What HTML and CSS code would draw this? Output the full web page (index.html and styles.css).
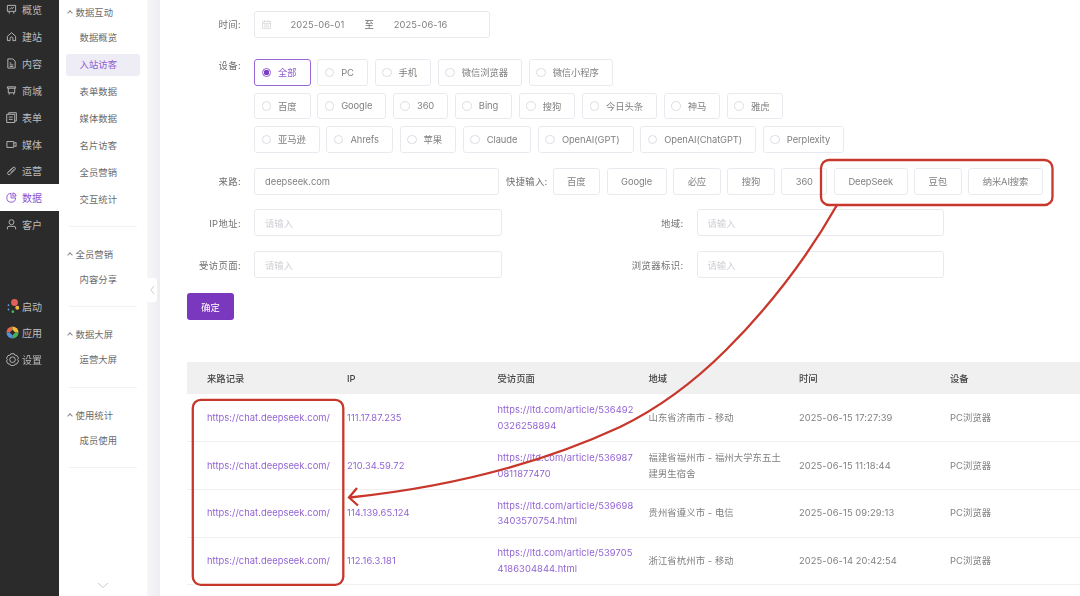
FILE: index.html
```html
<!DOCTYPE html>
<html lang="zh-CN">
<head>
  <meta charset="UTF-8">
  <title>入站访客</title>
  <link rel="stylesheet" href="styles.css">
</head>
<body>
  <!-- Main rail -->
  <nav class="rail">
    <ul class="rail-group">
      <li class="rail-item"><svg class="rail-icon" viewBox="0 0 12 12"><path d="M1.500 1.500h9v6.500h-9zM3.500 8v2.500M8.500 8v2.500M3.500 6l2-2 1.500 1 1.500-1.800"/></svg>概览</li>
      <li class="rail-item"><svg class="rail-icon" viewBox="0 0 12 12"><path d="M1.500 5.800 6 1.800l4.500 4V10.500h-3V8a1.500 1.500 0 0 0-3 0v2.500h-3z"/></svg>建站</li>
      <li class="rail-item"><svg class="rail-icon" viewBox="0 0 12 12"><path d="M2 1h5.500L10 3.500V11H2zM4 5.500h2M4 7.500h4M4 9.300h4"/></svg>内容</li>
      <li class="rail-item"><svg class="rail-icon" viewBox="0 0 12 12"><path d="M1.500 2h9v1.500h-9zM2.500 3.500v5h7v-5M3.500 8.500v2M8.500 8.500v2"/></svg>商城</li>
      <li class="rail-item"><svg class="rail-icon" viewBox="0 0 12 12"><path d="M3 2.500V.8h8.300v9H9.500M.8 2.500h8.700v9H.8zM3 5.500h4.300M3 8h4.300"/></svg>表单</li>
      <li class="rail-item"><svg class="rail-icon" viewBox="0 0 12 12"><path d="M1 2.800h7.500v6.400H1zM8.500 4.800l2.500-1v4.400l-2.500-1"/></svg>媒体</li>
      <li class="rail-item"><svg class="rail-icon" viewBox="0 0 12 12"><path d="M3.500 7 7.800 2.700a1.500 1.500 0 0 1 2.100 2.100L4.600 10.100a1.300 1.300 0 0 1-2.400-2.300L7.500 3M5 8.500 9 4.500"/></svg>运营</li>
      <li class="rail-item is-active"><svg class="rail-icon" viewBox="0 0 12 12"><path d="M5.500 1.500a4.800 4.800 0 1 0 5 5h-5zM7.500 1a3.800 3.800 0 0 1 3.500 3.500H7.500z"/></svg>数据</li>
      <li class="rail-item"><svg class="rail-icon" viewBox="0 0 12 12"><circle cx="6" cy="3.500" r="2.700"/><path d="M1.500 11.300V9.800a1.800 1.800 0 0 1 1.800-1.800h5.400a1.800 1.800 0 0 1 1.800 1.800v1.500"/></svg>客户</li>
    </ul>
    <ul class="rail-group rail-tools">
      <li class="rail-item"><svg class="rail-icon icon-start" viewBox="0 0 13 15"><circle cx="8.500" cy="3.500" r="3.400" fill="#e0605a" stroke="none"/><circle cx="11.300" cy="8.800" r="2" fill="#eebb3c" stroke="none"/><circle cx="6.800" cy="12.700" r="1.400" fill="#3fb45c" stroke="none"/><circle cx="2.500" cy="6.200" r=".9" fill="#5b9fe0" stroke="none"/><circle cx="2.500" cy="10.500" r=".9" fill="#5b9fe0" stroke="none"/></svg>启动</li>
      <li class="rail-item"><svg class="rail-icon" viewBox="0 0 14 14"><path d="M7 .5a6.500 6.500 0 0 0-6.500 6.500h3.500L7 4z" fill="#e0684a" stroke="none"/><path d="M7 .5A6.500 6.500 0 0 1 13.500 7H10L7 4z" fill="#efbd3a" stroke="none"/><path d="M13.500 7A6.500 6.500 0 0 1 7 13.500V10l3-3z" fill="#45b05c" stroke="none"/><path d="M7 13.500A6.500 6.500 0 0 1 .5 7H4l3 3z" fill="#4f92dc" stroke="none"/></svg>应用</li>
      <li class="rail-item"><svg class="rail-icon" viewBox="0 0 14 14"><path d="M5.200 .8h3.600l1 1.700 2 .2 1.700 3-1.100 1.500 1.100 1.500-1.700 3-2 .2-1 1.700H5.200l-1-1.700-2-.2L.5 8.700 1.600 7.200.5 5.700l1.700-3 2-.2z"/><circle cx="7" cy="7.200" r="3"/></svg>设置</li>
    </ul>
  </nav>

  <!-- Sub menu -->
  <aside class="submenu">
    <section class="sub-group">
      <h4 class="sub-title"><i class="caret"></i>数据互动</h4>
      <a class="sub-link">数据概览</a>
      <a class="sub-link is-active">入站访客</a>
      <a class="sub-link">表单数据</a>
      <a class="sub-link">媒体数据</a>
      <a class="sub-link">名片访客</a>
      <a class="sub-link">全员营销</a>
      <a class="sub-link">交互统计</a>
    </section>
    <section class="sub-group">
      <h4 class="sub-title"><i class="caret"></i>全员营销</h4>
      <a class="sub-link">内容分享</a>
    </section>
    <section class="sub-group">
      <h4 class="sub-title"><i class="caret"></i>数据大屏</h4>
      <a class="sub-link">运营大屏</a>
    </section>
    <section class="sub-group">
      <h4 class="sub-title"><i class="caret"></i>使用统计</h4>
      <a class="sub-link">成员使用</a>
    </section>
    <svg class="sub-more" viewBox="0 0 12 7"><path d="M1 1l5 4.500L11 1"/></svg>
  </aside>

  <div class="gutter">
    <div class="collapse"><svg viewBox="0 0 6 12"><path d="M5 1 1 6l4 5"/></svg></div>
  </div>

  <main class="main">
    <div class="form-row row-time">
      <label class="field-label">时间:</label>
      <div class="date-range">
        <svg class="date-icon" viewBox="0 0 10 10"><path d="M.5 1.500h9v8h-9zM.5 3.800h9M2.800.5v2M7.200.5v2M2 5.500h6M2 7.500h6"/></svg>
        <span class="date-val">2025-06-01</span>
        <span class="date-to">至</span>
        <span class="date-val">2025-06-16</span>
      </div>
    </div>

    <div class="form-row row-device">
      <label class="field-label label-top">设备:</label>
      <div class="radio-rows">
        <div class="radio-row">
          <span class="radio is-on"><i></i>全部</span>
          <span class="radio"><i></i>PC</span>
          <span class="radio"><i></i>手机</span>
          <span class="radio"><i></i>微信浏览器</span>
          <span class="radio"><i></i>微信小程序</span>
        </div>
        <div class="radio-row">
          <span class="radio"><i></i>百度</span>
          <span class="radio"><i></i>Google</span>
          <span class="radio"><i></i>360</span>
          <span class="radio"><i></i>Bing</span>
          <span class="radio"><i></i>搜狗</span>
          <span class="radio"><i></i>今日头条</span>
          <span class="radio"><i></i>神马</span>
          <span class="radio"><i></i>雅虎</span>
        </div>
        <div class="radio-row">
          <span class="radio"><i></i>亚马逊</span>
          <span class="radio"><i></i>Ahrefs</span>
          <span class="radio"><i></i>苹果</span>
          <span class="radio"><i></i>Claude</span>
          <span class="radio"><i></i>OpenAI(GPT)</span>
          <span class="radio"><i></i>OpenAI(ChatGPT)</span>
          <span class="radio"><i></i>Perplexity</span>
        </div>
      </div>
    </div>

    <div class="form-row row-source">
      <label class="field-label">来路:</label>
      <div class="input input-source has-value">deepseek.com</div>
      <span class="quick-label">快捷输入:</span>
      <div class="quick-btns">
        <span class="quick">百度</span>
        <span class="quick">Google</span>
        <span class="quick">必应</span>
        <span class="quick">搜狗</span>
        <span class="quick">360</span>
        <span class="quick">DeepSeek</span>
        <span class="quick">豆包</span>
        <span class="quick">纳米AI搜索</span>
      </div>
    </div>

    <div class="form-row row-pair">
      <div class="field">
        <label class="field-label">IP地址:</label>
        <div class="input">请输入</div>
      </div>
      <div class="field">
        <label class="field-label">地域:</label>
        <div class="input">请输入</div>
      </div>
    </div>

    <div class="form-row row-pair">
      <div class="field">
        <label class="field-label">受访页面:</label>
        <div class="input">请输入</div>
      </div>
      <div class="field">
        <label class="field-label">浏览器标识:</label>
        <div class="input">请输入</div>
      </div>
    </div>

    <button class="submit">确定</button>

    <table class="records">
      <thead>
        <tr>
          <th class="col-src">来路记录</th>
          <th class="col-ip">IP</th>
          <th class="col-page">受访页面</th>
          <th class="col-area">地域</th>
          <th class="col-time">时间</th>
          <th>设备</th>
        </tr>
      </thead>
      <tbody>
        <tr>
          <td class="link">https://chat.deepseek.com/</td>
          <td class="link">111.17.87.235</td>
          <td class="link">https://ltd.com/article/5364920326258894</td>
          <td>山东省济南市 - 移动</td>
          <td>2025-06-15 17:27:39</td>
          <td>PC浏览器</td>
        </tr>
        <tr>
          <td class="link">https://chat.deepseek.com/</td>
          <td class="link">210.34.59.72</td>
          <td class="link">https://ltd.com/article/5369870811877470</td>
          <td>福建省福州市 - 福州大学东五土建男生宿舍</td>
          <td>2025-06-15 11:18:44</td>
          <td>PC浏览器</td>
        </tr>
        <tr>
          <td class="link">https://chat.deepseek.com/</td>
          <td class="link">114.139.65.124</td>
          <td class="link">https://ltd.com/article/5396983403570754.html</td>
          <td>贵州省遵义市 - 电信</td>
          <td>2025-06-15 09:29:13</td>
          <td>PC浏览器</td>
        </tr>
        <tr>
          <td class="link">https://chat.deepseek.com/</td>
          <td class="link">112.16.3.181</td>
          <td class="link">https://ltd.com/article/5397054186304844.html</td>
          <td>浙江省杭州市 - 移动</td>
          <td>2025-06-14 20:42:54</td>
          <td>PC浏览器</td>
        </tr>
      </tbody>
    </table>
  </main>

  <!-- Red annotation drawn over the page -->
  <svg class="markup" viewBox="0 0 1080 596">
    <rect x="821" y="160" width="231.500" height="45" rx="8"/>
    <rect x="192.800" y="399.800" width="150.500" height="185" rx="8"/>
    <path d="M837 205C808 256 770 306 726 350C693 383 655 410 620 427C540 464 450 487 350 497.500"/>
    <path d="M357 488 349 497.500 358 505.500"/>
  </svg>
</body>
</html>
```

FILE: styles.css
```css
* {
  box-sizing: border-box;
}
html, body {
  margin: 0;
  padding: 0;
  height: 596px;
  overflow: hidden;
}
body {
  position: relative;
  display: flex;
  background: #fff;
  color: #6f6f6f;
  font-family: Inter, "Noto Sans CJK SC", sans-serif;
  font-size: 9.33px;
  filter: blur(.35px); /* the shot is a soft upscale */
}
ul {
  list-style: none;
  margin: 0;
  padding: 0;
}

/* Main rail */
.rail {
  flex: 0 0 59px;
  background: #2b2b2b;
}
.rail-group {
  margin-top: -3.500px;
}
.rail-tools {
  margin-top: 54.500px;
}
.rail-item {
  display: flex;
  align-items: center;
  height: 26.850px;
  padding-left: 5.500px;
  gap: 5.500px;
  color: #bdbdbd;
  font-size: 10px;
}
.rail-item.is-active {
  background: #fff;
  color: #8a52d2;
}
.rail-icon {
  flex: 0 0 11px;
  width: 11px;
  height: 11px;
  fill: none;
  stroke: currentColor;
  stroke-width: 1;
}
.rail-tools .rail-icon {
  flex-basis: 13px;
  width: 13px;
  height: 13px;
}
.rail-tools .icon-start {
  height: 15px;
}
.rail-tools .rail-item {
  gap: 3.500px;
}

/* Sub menu */
.submenu {
  position: relative;
  flex: 0 0 88px;
  background: #fff;
  padding: 5.500px 7px 0 7px;
}
.sub-group {
  margin: 0 3px 20.300px 3px;
  padding-bottom: 10.500px;
  border-bottom: 1px solid #f3f3f6;
}
.sub-title {
  display: flex;
  align-items: center;
  height: 13px;
  margin: 0 0 8.750px -3px;
  font-weight: 400;
  font-size: 9.33px;
  letter-spacing: .1px;
  color: #6a6a6a;
}
.caret {
  width: 4px;
  height: 4px;
  margin: 2px 3.500px 0 2px;
  border-left: 1px solid #888;
  border-top: 1px solid #888;
  transform: rotate(45deg);
}
.sub-link {
  display: block;
  height: 21.500px;
  line-height: 21.500px;
  margin: 0 -3px 5.400px -3px;
  padding-left: 13.500px;
  border-radius: 3px;
  letter-spacing: .1px;
  color: #6a6a6a;
}
.sub-link.is-active {
  background: #eeecf5;
  color: #8f5dd3;
}
.sub-more {
  position: absolute;
  left: 38px;
  top: 582px;
  width: 12px;
  height: 7px;
  fill: none;
  stroke: #ccc;
}

.gutter {
  position: relative;
  flex: 0 0 13px;
  background: linear-gradient(90deg, #f6f5f8, #eeedf1);
}
.collapse {
  position: absolute;
  left: 0;
  top: 278px;
  width: 10px;
  height: 24px;
  background: #fff;
  border-radius: 0 3px 3px 0;
  display: flex;
  align-items: center;
  justify-content: center;
}
.collapse svg {
  width: 5px;
  height: 10px;
  fill: none;
  stroke: #c4c4c8;
}

/* Filter form */
.main {
  flex: 1;
  min-width: 0;
  padding: 11px 0 0 27px;
}
.form-row {
  display: flex;
  align-items: center;
}
.row-device {
  align-items: flex-start;
  margin-top: 21.500px;
}
.row-source {
  margin-top: 15.500px;
}
.row-pair {
  margin-top: 14.750px;
  gap: 128px;
}
.field {
  display: flex;
  align-items: center;
}
.field-label {
  flex: 0 0 54px;
  margin-right: 13px;
  text-align: right;
  white-space: nowrap;
  letter-spacing: .4px;
  color: #707070;
}
.label-top {
  line-height: 13px;
}
.date-range {
  display: flex;
  align-items: center;
  width: 235.500px;
  height: 26.500px;
  border: 1px solid #e8e8ef;
  border-radius: 3px;
  padding-left: 7px;
}
.date-icon {
  width: 9px;
  height: 9px;
  fill: none;
  stroke: #d2d2d6;
  stroke-width: .8;
}
.date-val {
  letter-spacing: .1px;
  color: #808080;
}
.date-range .date-icon + .date-val {
  margin-left: 19.500px;
}
.date-to {
  margin: 0 20px;
  color: #6a6a6a;
}
.radio-rows {
  display: flex;
  flex-direction: column;
  gap: 7px;
}
.radio-row {
  display: flex;
  gap: 6.700px;
}
.radio {
  display: flex;
  align-items: center;
  height: 26.500px;
  padding: 0 13px 0 6.500px;
  border: 1px solid #e9e9f0;
  border-radius: 3px;
  letter-spacing: -.08px;
  color: #808080;
  white-space: nowrap;
}
.radio i {
  width: 9.500px;
  height: 9.500px;
  margin-right: 7px;
  border: 1px solid #dcdce2;
  border-radius: 50%;
}
.radio.is-on {
  border-color: #9a68d6;
  color: #8f5dd3;
}
.radio.is-on i {
  border-color: #8f5dd3;
  background: radial-gradient(circle, #7b3fc4 0 2.600px, #fff 3px);
}
.input {
  display: flex;
  align-items: center;
  width: 247.500px;
  height: 27px;
  padding-left: 10px;
  border: 1px solid #e9e9f0;
  border-radius: 3px;
  color: #cfcfd6;
}
.input-source {
  width: 245px;
  height: 26.500px;
}
.has-value {
  color: #808080;
}
.quick-label {
  margin: 0 5px 0 7px;
  white-space: nowrap;
  letter-spacing: .3px;
  color: #707070;
}
.quick-btns {
  display: flex;
  gap: 6.600px;
}
.quick {
  display: flex;
  align-items: center;
  height: 26.500px;
  padding: 0 13.500px;
  border: 1px solid #e9e9f0;
  border-radius: 3px;
  letter-spacing: -.1px;
  color: #808080;
  white-space: nowrap;
}
.submit {
  display: block;
  width: 47px;
  height: 27px;
  margin-top: 15px;
  padding: 0;
  border: 0;
  border-radius: 3px;
  background: #7a38bf;
  color: #fff;
  font: inherit;
}

/* Records table */
.records {
  width: 893px;
  margin-top: 42px;
  border-collapse: collapse;
  table-layout: fixed;
}
.records th {
  height: 32px;
  padding: 0 5px;
  background: #f0f0f0;
  color: #444;
  font-weight: 500;
  text-align: left;
}
.records th:first-child,
.records td:first-child {
  padding-left: 20px;
}
.col-src {
  width: 155px;
}
.col-ip,
.col-area {
  width: 150.500px;
}
.col-page,
.col-time {
  width: 151px;
}
.records td {
  height: 47.700px;
  padding: 0 7px 0 5px;
  border-bottom: 1px solid #f0f0f3;
  line-height: 15.500px;
  letter-spacing: .1px;
  word-break: break-all;
  color: #808080;
}
.records td:first-child {
  letter-spacing: .05px;
}
.records td.link {
  color: #9163d4;
}

.markup {
  position: absolute;
  left: 0;
  top: 0;
  width: 1080px;
  height: 596px;
  fill: none;
  stroke: #c8372b;
  stroke-width: 2.300;
  pointer-events: none;
}
```
